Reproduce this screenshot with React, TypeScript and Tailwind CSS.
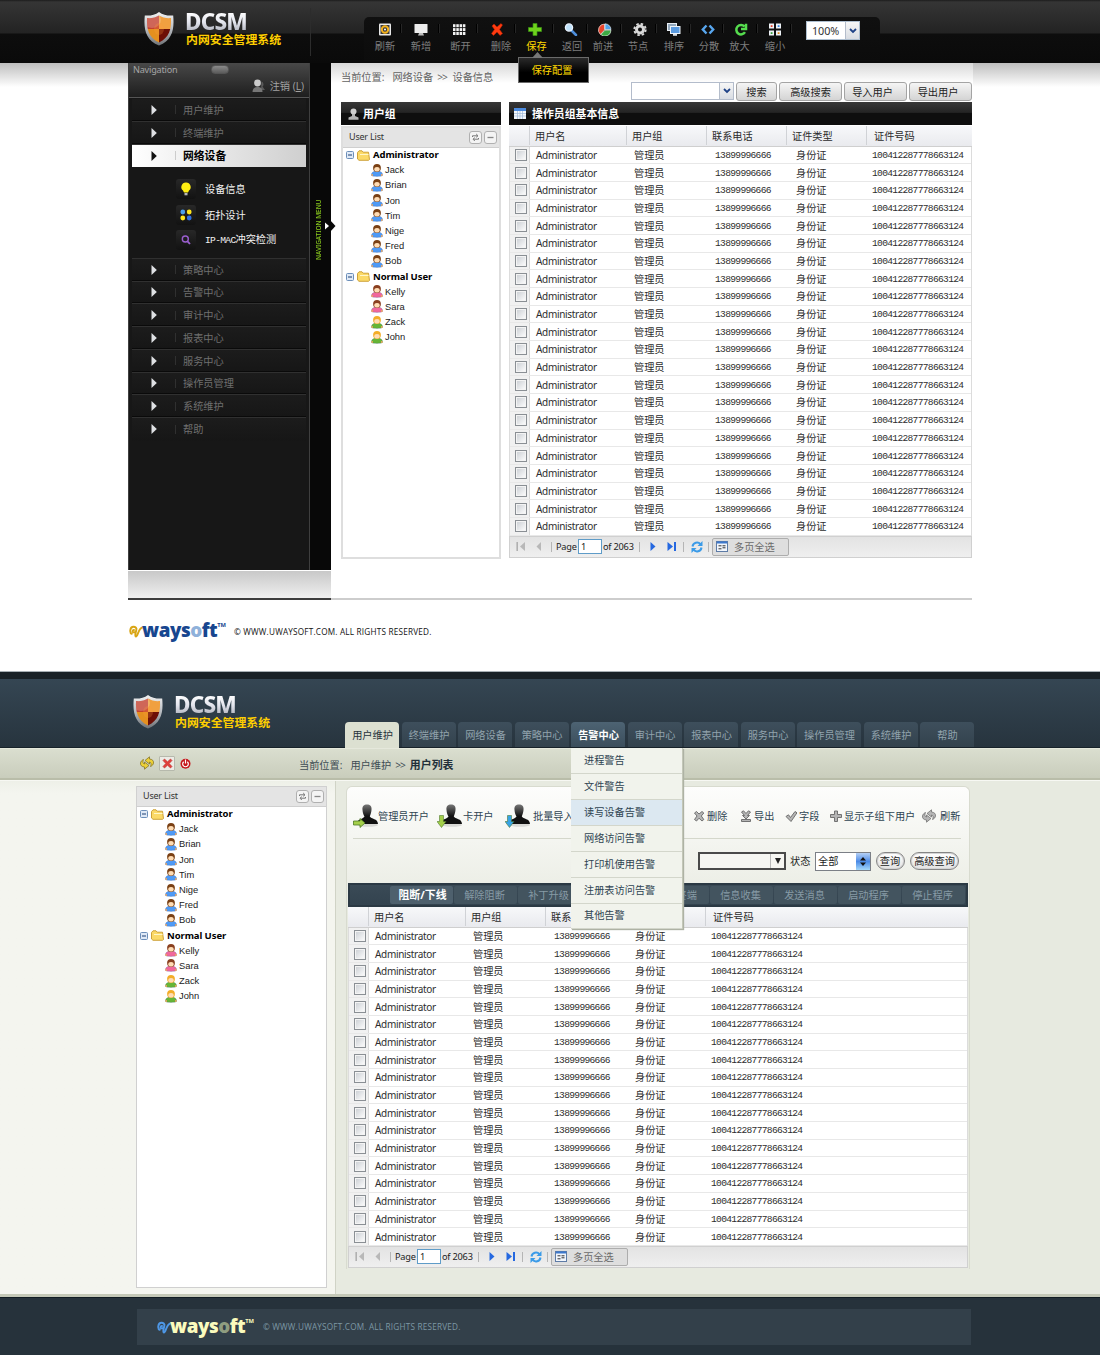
import React from 'react';

const CJK = "font-['Open_Sans','Noto_Sans_CJK_SC',sans-serif]";
const MONO = "font-['Liberation_Mono','Noto_Sans_CJK_SC',monospace] text-[9.6px] tracking-[-0.68px]";

function Shield() {
  return (
    <svg width="30" height="34" viewBox="0 0 30 34" className="shrink-0">
      <defs>
        <linearGradient id="rim" x1="0" y1="0" x2="0" y2="1">
          <stop offset="0" stopColor="#f2f2f2" />
          <stop offset="0.5" stopColor="#b9bdc2" />
          <stop offset="1" stopColor="#6e7276" />
        </linearGradient>
        <clipPath id="shieldClip">
          <path d="M15 3.500C12 5.500 7 6.500 3 6C2.500 17 4.500 25.500 15 30.500C25.500 25.500 27.500 17 27 6C23 6.500 18 5.500 15 3.500Z" />
        </clipPath>
      </defs>
      <path d="M15 0C11 3 6 4 .8 3.500C-.5 17 1.500 28 15 33.500C28.500 28 30.500 17 29.200 3.500C24 4 19 3 15 0Z" fill="url(#rim)" />
      <g clipPath="url(#shieldClip)">
        <rect width="15" height="17" fill="#c4402f" />
        <rect x="15" width="15" height="17" fill="#f0a040" />
        <rect y="17" width="15" height="17" fill="#e5901f" />
        <rect x="15" y="17" width="15" height="17" fill="#6d0f06" />
        <ellipse cx="8" cy="8" rx="9" ry="8" fill="#fff" opacity="0.2" />
        <ellipse cx="15" cy="17" rx="5" ry="6" fill="#ff9a3a" opacity="0.250" />
      </g>
    </svg>
  );
}

function Brand() {
  return (
    <div className="flex">
      <Shield />
      <div className="ml-[11px] flex flex-col">
        <div className="h-[20px] w-[66px] bg-gradient-to-b from-white via-[#e4e6ee] to-[#b0b3be] bg-clip-text font-['Noto_Sans',sans-serif] text-[22.500px] font-extrabold leading-[20px] tracking-[-0.800px] text-transparent">DCSM</div>
        <div className="ml-px whitespace-nowrap font-['Noto_Sans_CJK_SC',sans-serif] text-[11.900px] font-bold leading-[14px] text-[#ffcf00]">内网安全管理系统</div>
      </div>
    </div>
  );
}

const tool: Record<string, React.ReactNode> = {
  refresh: (<g><rect x="1" y="0.500" width="12" height="12" rx="1" fill="#e8e8e8" /><rect x="2.500" y="2" width="9" height="9" fill="#3c3c3c" /><circle cx="7" cy="6.500" r="3.200" fill="none" stroke="#f5b31d" strokeWidth="2" /><circle cx="7" cy="6.500" r="1" fill="#fff" /></g>),
  add: (<g><rect x="0.500" y="1" width="13" height="9" rx="0.500" fill="#ededed" /><path d="M5 10h4l1 2.500H4z" fill="#bcbcbc" /></g>),
  grid: (<g fill="#f2f2f2">{[0, 1, 2, 3].map((c) => [0, 1, 2].map((r) => <rect key={c + '-' + r} x={1 + c * 3.300} y={1.200 + r * 3.900} width="2.500" height="3" />))}</g>),
  del: <path d="M2 3L4 1L7 4L11 .5L12.500 2L9.500 6.500L12.500 10.500L10 12.500L7 9L3.500 12.500L1.500 10.500L4.500 6.500Z" fill="#ff3b10" stroke="#c42000" strokeWidth="0.500" />,
  save: <path d="M5 0.500h4v4h4.500v4H9v4H5v-4H.5v-4H5z" fill="#6fd21c" stroke="#3b9414" strokeWidth="0.700" />,
  back: (<g><path d="M7.500 7.500L12 12" stroke="#4f8fdc" strokeWidth="2.500" strokeLinecap="round" /><circle cx="5" cy="4.500" r="3.600" fill="#bfe2fb" stroke="#eaf4ff" strokeWidth="1.300" /></g>),
  forward: (<g><path d="M6.500 7L6.500 1A6 6 0 0 0 2.500 11.500Z" fill="#e8442c" stroke="#fff" strokeWidth="0.600" /><path d="M7 6.500V.8A6 6 0 0 1 13 6.500Z" fill="#51a5ea" stroke="#fff" strokeWidth="0.600" /><path d="M7 7.200H13A6 6 0 0 1 2.800 11.500Z" fill="#3daa44" stroke="#fff" strokeWidth="0.600" /></g>),
  node: (<g><circle cx="7" cy="6.500" r="3.500" fill="none" stroke="#d9d9d9" strokeWidth="3" /><circle cx="7" cy="6.500" r="5.700" fill="none" stroke="#d9d9d9" strokeWidth="1.900" strokeDasharray="2.500 1.976" /></g>),
  sort: (<g><rect x="0.500" y="0.500" width="9" height="7" fill="#93a8bc" stroke="#e8eef4" /><rect x="3.500" y="3.500" width="9.500" height="7" fill="#5b9be0" stroke="#eef4fa" /><path d="M6 11h4v1.800H6z" fill="#d8dde2" /></g>),
  spread: <path d="M5.500 2.500L1.800 6.500L5.500 10.500M8.500 2.500L12.200 6.500L8.500 10.500" fill="none" stroke="#58a6ee" strokeWidth="2.400" />,
  zoomin: <path d="M11 9.200A4.700 4.700 0 1 1 10.500 3.500M12 .8V6H7" fill="none" stroke="#55dc4e" strokeWidth="2.500" />,
  zoomout: (<g><g fill="#eef2f6"><rect x="1" y="0.500" width="5" height="5" /><rect x="8" y="0.500" width="5" height="5" /><rect x="1" y="7.500" width="5" height="5" /><rect x="8" y="7.500" width="5" height="5" /></g><rect x="2.700" y="2.200" width="1.800" height="1.800" fill="#e23c28" /><rect x="9.700" y="2.200" width="1.800" height="1.800" fill="#2e7fd9" /><rect x="2.700" y="9.200" width="1.800" height="1.800" fill="#36a13a" /><rect x="9.700" y="9.200" width="1.800" height="1.800" fill="#e08a1c" /></g>),
};

const tools = [
  ['refresh', '刷新', 'w-[35px]', 'pl-px'],
  ['add', '新增', 'w-[38px]', ''],
  ['grid', '断开', 'w-[38px]', 'pl-[3px]'],
  ['del', '删除', 'w-[38px]', 'pl-[8px]'],
  ['save', '保存', 'w-[38px]', 'pl-[3px]'],
  ['back', '返回', 'w-[34px]', 'pl-[2px]'],
  ['forward', '前进', 'w-[34px]', 'pr-[4px]'],
  ['node', '节点', 'w-[35px]', 'pr-[3px]'],
  ['sort', '排序', 'w-[34px]', ''],
  ['spread', '分散', 'w-[33px]', 'pl-[3px]'],
  ['zoomin', '放大', 'w-[34px]', 'pr-[3px]'],
  ['zoomout', '缩小', 'w-[34px]', ''],
];

function Header() {
  return (
    <header className="flex h-[63px] bg-[linear-gradient(#1c1c1c_0px,#353535_2px,#232323_33px,#0d0d0d_34px,#0a0a0a_63px)]">
      <div className="ml-[144px] mt-[12px] w-[166px]"><Brand /></div>
      <div className="mt-[8px] h-[48px] w-px bg-[#2c2c2c]" />
      <div className="ml-[53px] mt-[17px] flex h-[44px] w-[516px] rounded-t-[5px] bg-[linear-gradient(#101010,#0c0c0c)] pl-[3px]">
        {tools.map(([icon, label, w, shift]) => (
          <div key={icon} className={'relative flex shrink-0 flex-col items-center pt-[6px] ' + w}>
            <div className="flex w-full justify-center">
              <svg width="14" height="13" viewBox="0 0 14 13">{tool[icon]}</svg>
            </div>
            <div className={'mt-[4px] whitespace-nowrap text-[10.200px] leading-[12px] ' + shift + (icon === 'save' ? ' text-[#ffd800]' : ' text-[#7d7d7d]')}>{label}</div>
            <div className="absolute right-0 top-[7px] h-[9px] w-[2px] border-r border-[#262626] bg-black" />
            {icon === 'save' && (
              <div className="absolute left-[2px] top-[40px] z-20 flex h-[26px] w-[71px] items-center justify-center border border-[#6b6b6b] bg-[linear-gradient(#2a2a2a,#000_60%)] text-[10.200px] leading-[12px] text-[#ffd800]">
                <svg className="absolute left-[13px] top-[-6px]" width="11" height="6" viewBox="0 0 11 6"><path d="M0 6L5.500 0L11 6Z" fill="#777" /></svg>
                <span className="pr-[3px]">保存配置</span>
              </div>
            )}
          </div>
        ))}
        <div className="ml-[14px] mt-[4px] flex h-[19px] w-[54px] border border-[#aebfd0] bg-white">
          <div className="w-[38px] pl-[5px] font-['Noto_Sans',sans-serif] text-[10.800px] leading-[17px] tracking-[-0.100px] text-[#333]">100%</div>
          <ComboArrow />
        </div>
      </div>
    </header>
  );
}

function ComboArrow() {
  return (
    <div className="flex h-full w-[14px] items-center justify-center border-l border-[#b4bdcb] bg-gradient-to-b from-[#f7f7f7] to-[#d8dce2]">
      <svg width="8" height="6" viewBox="0 0 8 6"><path d="M1 1L4 4L7 1" fill="none" stroke="#1e4287" strokeWidth="1.800" /></svg>
    </div>
  );
}

function NavItem({ label, active, last }: { label: string; active?: boolean; last?: boolean }) {
  if (active)
    return (
      <div className="my-[0.500px] flex h-[21.750px] items-center bg-gradient-to-r from-white to-[#cfcfcf]">
        <svg className="ml-[19px]" width="6" height="10" viewBox="0 0 6 10"><path d="M.5 0L5.800 5L.5 10Z" fill="#111" /></svg>
        <div className="ml-[18px] h-[9px] w-px bg-[#ccc]" />
        <span className="ml-[7px] text-[10.800px] font-bold leading-[12px] text-black">{label}</span>
      </div>
    );
  return (
    <div className={'flex h-[22.750px] items-center bg-gradient-to-b from-[#1c1c1c] to-[#161616] ' + (last ? '' : 'border-b border-[#303030] shadow-[0_-1px_0_#0a0a0a_inset]')}>
      <svg className="ml-[19px]" width="6" height="10" viewBox="0 0 6 10"><path d="M.5 0L5.800 5L.5 10Z" fill="#dfe1e4" /></svg>
      <div className="ml-[18px] h-[9px] w-px bg-[#303030]" />
      <span className="ml-[7px] text-[10.200px] leading-[12px] text-[#6f6f6f]">{label}</span>
    </div>
  );
}

function SubItem({ label, icon }: { label: string; icon: React.ReactNode }) {
  return (
    <div className="flex h-[25.500px] items-center pl-[44px]">
      <div className="flex h-[20px] w-[20px] items-center justify-center rounded-[3px] bg-gradient-to-b from-[#282828] to-[#121212]">
        <svg width="14" height="14" viewBox="0 0 14 14">{icon}</svg>
      </div>
      <span className="ml-[9px] whitespace-nowrap text-[10.200px] leading-[12px] text-[#f2f2f2]">
        {label.startsWith('IP-MAC') ? <><span className={MONO}>IP-MAC</span>{label.slice(6)}</> : label}
      </span>
    </div>
  );
}

function Sidebar() {
  return (
    <div className="flex h-[507px] w-[203px] bg-[#080808]">
      <div className="flex w-[182px] flex-col border-l border-r border-[#3f3f3f] bg-[#171717]">
        <div className="h-[35px] border-b border-[#555] bg-gradient-to-b from-[#484848] via-[#333] to-[#1e1e1e] pl-[4px]">
          <div className="flex h-[13px] items-center">
            <span className="w-[78px] font-['Noto_Sans',sans-serif] text-[9.100px] leading-[12px] tracking-[-0.200px] text-[#a5a5a5]">Navigation</span>
            <div className="h-[9px] w-[18px] rounded-[4px] border border-[#555] bg-gradient-to-b from-[#8a8a8a] to-[#5c5c5c]" />
          </div>
          <div className="flex h-[20px] items-center justify-end pr-[5px] text-[#a2a2a2]">
            <svg width="14" height="14" viewBox="0 0 14 14"><path d="M9.500 2.500a3 3 0 0 1 1 5l2.500 3.500H9z" fill="#5a5a5a" /><circle cx="5.500" cy="4" r="3.400" fill="#ccc" /><path d="M.5 13C.5 9.500 2.500 8 5.500 8s5 1.300 5 5z" fill="#777" /></svg>
            <span className="ml-[4px] text-[10.200px] leading-[12px]">注销 (<span className="underline">L</span>)</span>
          </div>
        </div>
        <div className="flex flex-col px-[3px] pt-[1px]">
          <NavItem label="用户维护" />
          <NavItem label="终端维护" />
          <NavItem label="网络设备" active />
          <div className="border-b border-[#303030] pb-[5px] pt-[9px]">
            <SubItem label="设备信息" icon={<g><path d="M7 .5a4.500 4.500 0 0 1 3 8L9 10.500H5L4 8.500a4.500 4.500 0 0 1 3-8z" fill="#ffee12" /><path d="M5.500 11h3v2.300h-3z" fill="#b8b8b8" /></g>} />
            <SubItem label="拓扑设计" icon={<g><circle cx="3.800" cy="4" r="2.400" fill="#4b9fec" /><circle cx="10.200" cy="4" r="2.400" fill="#ffe61c" /><circle cx="3.800" cy="10" r="2.400" fill="#ffe61c" /><circle cx="10.200" cy="10" r="2.400" fill="#2f6fe0" /></g>} />
            <SubItem label="IP-MAC冲突检测" icon={<g fill="none" stroke="#9b5fd0" strokeWidth="1.400"><circle cx="6.300" cy="6" r="3" /><path d="M8.500 8.300L11 11" strokeWidth="1.800" /></g>} />
          </div>
          {['策略中心', '告警中心', '审计中心', '报表中心', '服务中心', '操作员管理', '系统维护'].map((l) => <NavItem key={l} label={l} />)}
          <NavItem label="帮助" last />
        </div>
      </div>
      <div className="relative flex w-[21px] items-start pt-[134px]">
        <span className="ml-[2px] h-[66px] w-[14px] rotate-180 whitespace-nowrap text-center font-['Noto_Sans',sans-serif] text-[6.600px] font-medium leading-[14px] tracking-[-0.100px] text-[#86c51d] [writing-mode:vertical-rl]">NAVIGATION MENU</span>
        <svg className="absolute left-[14px] top-[157px]" width="12" height="12" viewBox="0 0 12 12"><path d="M6 0L11.500 6L6 12Z" fill="#080808" /><path d="M1 2.500L5 6L1 9.500Z" fill="#fff" /></svg>
      </div>
    </div>
  );
}

function Person({ body, hair }: { body: string; hair: string }) {
  return (
    <svg width="12" height="13" viewBox="0 0 12 13">
      <path d="M.5 11.500C0 9 2 7 6 7S12 9 11.500 11.500C10 12.700 2 12.700 .5 11.500Z" fill={body} stroke="#1c3a78" strokeOpacity="0.350" strokeWidth="0.600" />
      <circle cx="6" cy="4" r="3.900" fill={hair} />
      <ellipse cx="6" cy="5.300" rx="2.700" ry="2.300" fill="#ffdcb4" />
      <circle cx="1.200" cy="11" r="0.900" fill="#f0a860" /><circle cx="10.800" cy="11" r="0.900" fill="#f0a860" />
    </svg>
  );
}

const blue = ['#4f9af5', '#7a4014'];
const pink = ['#f0689c', '#8a4020'];
const green = ['#66b536', '#f3ad28'];
const tree: [string, [string, string[]][]][] = [
  ['Administrator', ['Jack', 'Brian', 'Jon', 'Tim', 'Nige', 'Fred', 'Bob'].map((n) => [n, blue] as [string, string[]])],
  ['Normal User', [['Kelly', pink], ['Sara', pink], ['Zack', green], ['John', green]]],
];

function UserPanel({ size, plain }: { size: string; plain?: boolean }) {
  return (
    <div className={'flex flex-col bg-white ' + (plain ? 'border border-[#d0d0d0] ' : 'border-2 border-[#dedede] ') + size}>
      <div className="flex h-[19.500px] shrink-0 items-center justify-between border-b border-[#cfcfcf] bg-[#e4e4e4] pr-[2px] pl-[6px]">
        <span className="font-['Noto_Sans',sans-serif] text-[9px] leading-[12px] tracking-[-0.200px] text-[#333]">User List</span>
        <div className="flex gap-[2px]">
          <svg width="13" height="13" viewBox="0 0 13 13"><rect x="0.500" y="0.500" width="12" height="12" rx="2.500" fill="#f4f4f4" stroke="#b0b0b0" /><path d="M3.500 6V4.800H8.500M7.200 3L9 4.800L7.200 6.300M9.500 7V8.200H4.500M5.800 6.700L4 8.200L5.800 10" fill="none" stroke="#777" /></svg>
          <svg width="13" height="13" viewBox="0 0 13 13"><rect x="0.500" y="0.500" width="12" height="12" rx="2.500" fill="#f4f4f4" stroke="#b0b0b0" /><path d="M3.500 6.500H9.500" stroke="#888" strokeWidth="1.300" /></svg>
        </div>
      </div>
      {tree.map(([group, users]) => (
        <div key={group} className="flex flex-col">
          <div className="flex h-[15.200px] items-center pl-[3px]">
            <svg width="8" height="8" viewBox="0 0 8 8"><rect x="0.500" y="0.500" width="7" height="7" rx="1" fill="#dfe9f6" stroke="#6c8fba" /><path d="M2 4H6" stroke="#1d3f73" /></svg>
            <svg className="ml-[3px]" width="13" height="11" viewBox="0 0 13 11"><path d="M.5 2.500L2 .8H5L6.200 2.200H11.500L12.500 9.500L11.500 10.300H2L.5 9Z" fill="#fbd968" stroke="#c89a2c" strokeWidth="0.900" /><path d="M3 4.500H11.500" stroke="#fff6c8" /></svg>
            <span className="ml-[3px] font-['Noto_Sans',sans-serif] text-[9.500px] font-bold leading-[12px] tracking-[-0.080px] text-black">{group}</span>
          </div>
          {users.map(([n, [body, hair]]) => (
            <div key={n} className="flex h-[15.200px] items-center pl-[28px]">
              <Person body={body} hair={hair} />
              <span className="ml-[2px] font-['Liberation_Sans',sans-serif] text-[9.350px] leading-[12px] text-[#222]">{n}</span>
            </div>
          ))}
        </div>
      ))}
    </div>
  );
}

function Pager() {
  const bar = 'h-[10px] w-px bg-[#b5b5b5]';
  return (
    <div className="flex h-[22px] shrink-0 items-center border border-[#d0d0d0] bg-gradient-to-b from-[#e3e3e3] to-[#efefef] font-['Noto_Sans','Noto_Sans_CJK_SC',sans-serif] text-[9.200px] leading-[12px] tracking-[-0.200px] text-[#222]">
      <svg className="ml-[6px]" width="10" height="9" viewBox="0 0 10 9"><path d="M1.200 0V9" stroke="#b0b0b0" strokeWidth="1.600" /><path d="M9 0L4 4.500L9 9Z" fill="#b8b8b8" /></svg>
      <svg className="ml-[10px]" width="6" height="9" viewBox="0 0 6 9"><path d="M5 0L.5 4.500L5 9Z" fill="#b8b8b8" /></svg>
      <div className={'ml-[9px] ' + bar} />
      <span className="ml-[4px] w-[22px]">Page</span>
      <div className="h-[15px] w-[24px] border border-[#5f9cc8] bg-white pl-[2px] leading-[13px]">1</div>
      <span className="ml-[1px] w-[33px] whitespace-nowrap">of 2063</span>
      <div className={'ml-[3px] ' + bar} />
      <svg className="ml-[10px]" width="6" height="9" viewBox="0 0 6 9"><path d="M.5 0L5.500 4.500L.5 9Z" fill="#2568e0" /></svg>
      <svg className="ml-[11px]" width="10" height="9" viewBox="0 0 10 9"><path d="M.5 0L6 4.500L.5 9Z" fill="#2568e0" /><path d="M8 0V9" stroke="#2568e0" strokeWidth="2" /></svg>
      <div className={'ml-[6px] ' + bar} />
      <svg className="ml-[7px]" width="12" height="12" viewBox="0 0 12 12"><path d="M1.500 5.500A4.500 4.500 0 0 1 9.500 3.300M10.500 6.500A4.500 4.500 0 0 1 2.500 8.700" fill="none" stroke="#3b9be8" strokeWidth="2" /><path d="M11.500 0V5H6.500Z" fill="#3b9be8" /><path d="M.5 12V7H5.500Z" fill="#3b9be8" /></svg>
      <div className={'ml-[5px] ' + bar} />
      <div className="ml-[3px] flex h-[18px] w-[77px] items-center rounded-[2px] border border-[#adadad] bg-[#dedede] pl-[3px]">
        <svg width="12" height="11" viewBox="0 0 12 11"><rect x="0.500" y="0.500" width="11" height="10" fill="#f2f6fc" stroke="#5d7ba6" /><path d="M1 1.500H11" stroke="#3d78cc" strokeWidth="2" /><path d="M2.500 4.800H5.500M6.500 4.800H9.500M2.500 7.800H5.500M6.500 6.800H9.500" stroke="#333" /></svg>
        <span className="ml-[6px] text-[10.200px] tracking-normal text-[#6b6b6b]">多页全选</span>
      </div>
    </div>
  );
}

function DataGrid({ rows, cls }: { rows: number; cls: string }) {
  const cols = 'grid grid-cols-[20px_97px_80px_80px_1fr] items-center';
  const h = 'flex h-[19px] items-center border-l border-[#d0d2d6] pl-[5px]';
  return (
    <div className={'flex flex-col bg-white ' + cls}>
      <div className={cols + ' h-[20.500px] shrink-0 border-b border-[#cfcfcf] bg-gradient-to-b from-[#f7f8fa] to-[#e9eaee] text-[10.200px] leading-[12px] text-[#2b2b2b]'}>
        <div />
        <div className={h}>用户名</div>
        <div className={h}>用户组</div>
        <div className={h}>联系电话</div>
        <div className={h}><span className="w-[74px]">证件类型</span><div className="flex h-[19px] items-center border-l border-[#d0d2d6] pl-[7px]">证件号码</div></div>
      </div>
      <div className="flex flex-col border-x border-[#dcdcdc]">
        {Array.from({ length: rows }, (_, i) => (
          <div key={i} className={cols + ' h-[17.700px] shrink-0 border-b border-[#e8e8e8] text-[10.200px] leading-[12px] text-[#2e2e2e]'}>
            <div className="flex h-full items-center border-r border-[#d8d8d8] bg-[#f1f1f1] pl-[5px]">
              <div className="h-[12px] w-[12px] border border-[#8a8f94] bg-gradient-to-br from-[#c9cdd2] to-white shadow-[inset_0_0_0_1px_#f4f4f4]" />
            </div>
            <div className="pl-[6px] font-['Noto_Sans',sans-serif] text-[10px] tracking-[-0.320px]">Administrator</div>
            <div className="pl-[7px]">管理员</div>
            <div className={'pl-[8px] pt-[2px] ' + MONO}>13899996666</div>
            <div className="flex items-center pl-[9px]"><span className="w-[76px]">身份证</span><span className={'pt-[2px] ' + MONO}>100412287778663124</span></div>
          </div>
        ))}
      </div>
      <Pager />
    </div>
  );
}

function Wordmark({ mark, main, o }: { mark: string; main: string; o: string }) {
  return (
    <div className="flex h-[21px] w-[97px] items-start">
      <svg className="mt-[4px] shrink-0" width="15" height="13" viewBox="0 0 15 13"><path d="M2.800 8.800C.5 8 .6 2 4.500 1.800C8.500 1.600 8 7 5 7.400C2.800 7.600 3.600 4.800 5 5M7.400 3.500C7.800 6 5 10.500 6.800 11.500C9 12 9 3 13.800 2.200" fill="none" stroke={mark} strokeWidth="1.900" strokeLinecap="round" /></svg>
      <span className="ml-[-2px] font-['Open_Sans',sans-serif] text-[18.800px] font-extrabold leading-[19px] tracking-[-0.450px]"><span className={main}>ways</span><span className={o}>o</span><span className={main}>ft</span></span>
      <span className={"mt-px font-['Open_Sans',sans-serif] text-[5.800px] font-bold leading-[6px] " + main}>TM</span>
    </div>
  );
}

function GlossButton({ label, w }: { label: string; w: string }) {
  return <button className={'flex h-[19px] items-center justify-center rounded-[3px] border border-[#a4a4a4] bg-gradient-to-b from-[#f5f5f5] to-[#d4d4d4] text-[10.200px] leading-[12px] text-[#222] ' + w}>{label}</button>;
}

function DarkTitle({ label, icon }: { label: string; icon: React.ReactNode }) {
  return (
    <div className="flex h-[23px] shrink-0 items-center bg-[linear-gradient(#383838,#242424_45%,#0e0e0e_50%,#0e0e0e)]">
      {icon}
      <span className="text-[10.900px] font-bold leading-[12px] text-white">{label}</span>
    </div>
  );
}

function DarkScreen() {
  return (
    <section className="h-[672px] bg-white">
      <Header />
      <div className="h-[608px] bg-[linear-gradient(#bebebe,#fff_24px)]">
        <div className="ml-[128px] flex h-[507px] w-[844px]">
          <Sidebar />
          <div className="flex flex-1 flex-col bg-gradient-to-b from-[#d8d8d8] to-white to-[20px] pl-[10px]">
            <div className="flex h-[39px] items-start">
              <div className="mt-[8px] w-[290px] whitespace-pre text-[10.200px] leading-[12px] text-[#636363]">当前位置:<span className="ml-[8px]">网络设备</span><span className="ml-[4px] mr-[3px] tracking-[-1px]">&gt;&gt;</span> 设备信息</div>
              <div className="mt-[19px] flex w-[342px] shrink-0 gap-[2px]">
                <div className="flex h-[18px] w-[103px] border border-[#b3bccb] bg-white"><div className="w-[87px]" /><ComboArrow /></div>
                <GlossButton label="搜索" w="w-[41px]" />
                <GlossButton label="高级搜索" w="w-[63px]" />
                <GlossButton label="导入用户" w="w-[63px] pr-[6px]" />
                <GlossButton label="导出用户" w="w-[63px] pr-[5px]" />
              </div>
            </div>
            <div className="flex">
              <div className="flex w-[160px] flex-col">
                <DarkTitle label="用户组" icon={<svg className="ml-[7px] mr-[4px]" width="11" height="12" viewBox="0 0 11 12"><circle cx="5.500" cy="3.500" r="3" fill="#cfcfcf" /><path d="M4 6h3v2l3.500 1.500v2.200H.5V9.500L4 8z" fill="#b5b5b5" /></svg>} />
                <UserPanel size="mt-[1px] h-[433px] w-[160px]" />
              </div>
              <div className="ml-[8px] flex w-[463px] flex-col">
                <DarkTitle label="操作员组基本信息" icon={<svg className="ml-[5px] mr-[6px]" width="12" height="11" viewBox="0 0 12 11"><rect width="12" height="11" rx="0.500" fill="#f4f8fc" /><rect width="12" height="3" fill="#4b8ade" /><path d="M3.500 3V11M6 3V11M8.500 3V11M0 5.500H12M0 8H12" stroke="#9db9da" strokeWidth="0.700" /></svg>} />
                <DataGrid rows={22} cls="mt-[1px]" />
              </div>
            </div>
          </div>
        </div>
        <div className="ml-[128px] flex h-[30px] w-[844px] items-end">
          <div className="h-[29px] w-[203px] border-b-2 border-[#3c3c3c] bg-gradient-to-b from-[#c8c8c8] to-[#f0f0f0]" />
          <div className="h-[2px] flex-1 bg-[#cdcdcd]" />
        </div>
        <div className="ml-[129px] mt-[21px] flex items-center">
          <Wordmark mark="#d9a514" main="text-[#17468f]" o="text-[#8fb1da]" />
          <span className="ml-[8px] whitespace-nowrap font-['Open_Sans',sans-serif] text-[8.200px] leading-[12px] tracking-[0.200px] text-[#111]">© WWW.UWAYSOFT.COM. ALL RIGHTS RESERVED.</span>
        </div>
      </div>
      <div className="h-px bg-[#a8b0b4]" />
    </section>
  );
}

const tabs: [string, string][] = [
  ['用户维护', 'w-[54px]'], ['终端维护', 'w-[54px]'], ['网络设备', 'w-[54px]'], ['策略中心', 'w-[54px]'], ['告警中心', 'w-[54px]'],
  ['审计中心', 'w-[54px]'], ['报表中心', 'w-[54px]'], ['服务中心', 'w-[54px]'], ['操作员管理', 'w-[64px]'], ['系统维护', 'w-[54px]'], ['帮助', 'w-[54px]'],
];
const menu = ['进程警告', '文件警告', '读写设备告警', '网络访问告警', '打印机使用告警', '注册表访问告警', '其他告警'];

function DropMenu() {
  return (
    <div className="absolute left-0 top-[26px] z-30 w-[112px] border-r border-[#c3c7b8] bg-[#f1f3ec] font-normal shadow-[1px_1px_1px_#aeb2a4]">
      {menu.map((m, i) => (
        <div key={m} className={'flex h-[26.080px] items-center border-b border-[#d3d6cb] pb-[2px] pl-[13px] text-[10.200px] leading-[12px] text-[#2f4452] last:h-[25px] ' + (i === 2 ? 'bg-[#dce8f1]' : '')}>{m}</div>
      ))}
    </div>
  );
}

function Account({ color, down }: { color: string; down?: boolean }) {
  return (
    <svg className="shrink-0" width="26" height="25" viewBox="0 0 26 25">
      <defs><linearGradient id="bust" x1="0" y1="0" x2="0" y2="1"><stop offset="0" stopColor="#777" /><stop offset="0.600" stopColor="#111" /></linearGradient></defs>
      <ellipse cx="15" cy="21" rx="10" ry="1.800" fill="#000" opacity="0.120" />
      <path d="M9.500 6C9 2 11 .5 14 .5S19 2 18.500 6C18.300 9 17.300 11 16.800 12.500C18 15 25 14.500 25 20H3.500C4 15 10.500 15 11.500 12.500C10.500 11 9.700 9 9.500 6Z" fill="url(#bust)" />
      {down ? <path d="M2.500 11.500H6.500V17.500H9L4.500 23.500L0 17.500H2.500Z" fill={color} stroke="#47752a" strokeOpacity="0.700" strokeWidth="0.800" /> : <path d="M.5 17H7V14.500L12 19L7 23.500V21H.5Z" fill={color} stroke="#4d7a24" strokeWidth="0.800" />}
    </svg>
  );
}

const actionIcon = {
  del: <path d="M1.500 3L3.500 1.500L6 4L9 1.500L10.800 3L8.300 6L10.800 9.500L9 11L6 8.200L3.500 11L1.500 9.500L4 6Z" />,
  exp: <path d="M1.500 2L3.500 .8L6 3.500L8.500 .8L10.500 2L7.500 5.500H9.500L6 9L2.500 5.500H4.500ZM1.500 9.500H10.500V11.500H1.500Z" />,
  field: <path d="M1 6.500L3.500 4.800L5.500 7.500L10 1.500L12 2.800L6 11.500Z" />,
  plus: <path d="M4.500 1H7.500V4.500H11.500V7.500H7.500V11.500H4.500V7.500H.5V4.500H4.500Z" />,
};

function Action({ icon, label, cls }: { icon: keyof typeof actionIcon; label: string; cls: string }) {
  return (
    <div className={'flex shrink-0 items-center whitespace-nowrap ' + cls}>
      <svg width="12" height="12" viewBox="0 0 12 12" fill="#b5b5b5" stroke="#666" strokeWidth="0.900">{actionIcon[icon]}</svg>
      <span className="ml-[2px]">{label}</span>
    </div>
  );
}

function SyncIcon({ fill, line }: { fill: string; line: string }) {
  return (
    <svg width="14" height="14" viewBox="0 0 14 14" fill={fill} stroke={line} strokeWidth="0.700">
      <path d="M5 4.500L9.500 .8V3C12.500 3.200 13.800 5 13.500 7C13.300 8.500 12 10 10.500 10.500C11.500 8.500 11.300 6.300 9.500 6V8Z" />
      <path d="M9 9.500L4.500 13.200V11C1.500 10.800 .2 9 .5 7C.7 5.500 2 4 3.500 3.500C2.500 5.500 2.700 7.700 4.500 8V6Z" />
    </svg>
  );
}

function SlateScreen() {
  return (
    <section className="flex h-[683px] flex-col bg-[#26323b]">
      <div className="h-[7px] bg-[#1a2227]" />
      <div className="flex h-[69px] border-b border-[#172229] bg-gradient-to-b from-[#354653] to-[#27343e]">
        <div className="ml-[133px] mt-[16px] w-[212px]"><Brand /></div>
        <div className="mt-[43px] flex h-[25px] gap-[2.500px]">
          {tabs.map(([t, w], i) => (
            <div key={t} className={'relative flex shrink-0 items-center justify-center rounded-t-[4px] pl-px text-[10.200px] leading-[12px] ' + w + (i === 0 ? ' h-[26px] bg-[#dce0d1] text-[#26323b]' : i === 4 ? ' bg-gradient-to-b from-[#4d6373] to-[#3b4e5c] font-bold text-white' : ' bg-gradient-to-b from-[#3e4f5c] to-[#33424d] text-[#91a3ad]')}>
              {t}
              {i === 4 && <DropMenu />}
            </div>
          ))}
        </div>
      </div>
      <div className="flex h-[32px] items-center border-b-2 border-[#b9bda9] bg-[linear-gradient(#f0f2e8_0px,#dadecf_1px,#c9cdbc_30px)] text-[10.200px] leading-[12px] text-[#3d4b53]">
        <div className="flex w-[299px] shrink-0 items-center pl-[140px]">
          <SyncIcon fill="#ecd037" line="#7a6a20" />
          <div className="ml-[5px] flex h-[15px] w-[16px] items-center justify-center rounded-[1px] border border-[#b6b9ac] bg-[#ecebe5]">
            <svg width="11" height="11" viewBox="0 0 11 11"><path d="M1 2.500L2.500 1L5.500 3.800L8.500 1L10 2.500L7.200 5.500L10 8.500L8.500 10L5.500 7.200L2.500 10L1 8.500L3.800 5.500Z" fill="#e2403c" stroke="#b92a28" strokeWidth="0.600" /></svg>
          </div>
          <svg className="ml-[5px]" width="11" height="11" viewBox="0 0 11 11"><circle cx="5.500" cy="5.800" r="5" fill="#c5181c" /><path d="M3.700 3.800A2.800 2.800 0 1 0 7.300 3.800M5.500 1.500V5.500" fill="none" stroke="#fff" strokeWidth="1.200" /></svg>
        </div>
        <span className="whitespace-nowrap pt-[3px]">当前位置:<span className="ml-[8px]">用户维护</span><span className="mx-[4px] tracking-[-1px]">&gt;&gt;</span><b className="ml-[1px] text-[10.900px] text-[#22303a]">用户列表</b></span>
      </div>
      <div className="flex h-[514px] border-t border-[#f7f8f3] bg-[#e7eae0]">
        <div className="flex w-[336px] shrink-0 justify-end border-r border-[#d0d3c6] bg-gradient-to-b from-[#eef0e8] to-[#f4f5ef] to-[12px] pr-[8px] pt-[5px]">
          <UserPanel plain size="h-[502px] w-[191px]" />
        </div>
        <div className="ml-[10px] mt-[5px] flex h-[483px] w-[624px] flex-col rounded-t-[6px] border border-b-0 border-[#d8dbcf] bg-[linear-gradient(#fdfdfc,#eceee6_100px,#e7eae0_130px)] px-px">
          <div className="ml-[5px] flex h-[52px] w-[608px] items-center border-b border-[#d4d7cb] pt-[7px] text-[10.200px] leading-[12px] text-[#2f4452]">
            <Account color="#a4cf4a" /><span className="ml-[-1px] w-[59px] whitespace-nowrap">管理员开户</span>
            <Account color="#a4cf4a" down /><span className="w-[42px] whitespace-nowrap">卡开户</span>
            <Account color="#37a3e6" down /><span className="ml-[2px] w-[160px] whitespace-nowrap">批量导入</span>
            <Action icon="del" label="删除" cls="w-[47px]" />
            <Action icon="exp" label="导出" cls="w-[45px]" />
            <Action icon="field" label="字段" cls="w-[45px]" />
            <Action icon="plus" label="显示子组下用户" cls="w-[92px]" />
            <SyncIcon fill="#b5b5b5" line="#666" /><span className="ml-[4px] whitespace-nowrap">刷新</span>
          </div>
          <div className="flex h-[44px] items-center pl-[350px] text-[10.200px] leading-[12px] text-[#222]">
            <div className="flex h-[18px] w-[88px] justify-end border-2 border-[#4a4a4a] bg-[#f6f6f2]">
              <div className="flex w-[14px] items-center justify-center border-l border-[#b9b9b9]"><svg width="6" height="6" viewBox="0 0 6 6"><path d="M0 0H6L3 6Z" fill="#222" /></svg></div>
            </div>
            <span className="ml-[4px] w-[25px] whitespace-nowrap">状态</span>
            <div className="flex h-[19px] w-[56px] items-center border border-[#7b7f86] bg-white">
              <span className="w-[40px] pl-[2px]">全部</span>
              <div className="flex h-full w-[14px] items-center justify-center bg-gradient-to-b from-[#b5d0f4] via-[#4b8ae6] to-[#a5d8fa]"><svg width="6" height="9" viewBox="0 0 6 9"><path d="M0 3.500L3 0L6 3.500ZM0 5.500L3 9L6 5.500Z" fill="#111" /></svg></div>
            </div>
            <button className="ml-[5px] h-[18px] w-[29px] whitespace-nowrap rounded-full border border-[#858585] bg-gradient-to-b from-white to-[#e2e2e2] shadow-[inset_0_0_0_1px_#d4d4d4]"><span className="ml-[-1px]">查询</span></button>
            <button className="ml-[5px] h-[18px] w-[49px] whitespace-nowrap rounded-full border border-[#858585] bg-gradient-to-b from-white to-[#e2e2e2] shadow-[inset_0_0_0_1px_#d4d4d4]">高级查询</button>
          </div>
          <div className="flex h-[24px] w-[620px] shrink-0 items-center gap-px border-2 border-[#2b3944] bg-gradient-to-b from-[#3a4a56] to-[#33434f] pl-[40px] text-[10.200px] leading-[12px] text-[#879ba6]">
            {['阻断/下线', '解除阻断', '补丁升级', '远程协助', '重启终端', '信息收集', '发送消息', '启动程序', '停止程序'].map((t, i) => (
              <div key={t} className={'flex h-[18px] w-[63px] shrink-0 items-center justify-center whitespace-nowrap rounded-[2px] ' + (i === 0 ? 'bg-[#4e606d] pl-[2px] text-[10.900px] font-bold text-white' : 'bg-[#43545f] pr-[2px]')}>{t}</div>
            ))}
          </div>
          <DataGrid rows={18} cls="w-[620px]" />
        </div>
      </div>
      <div className="h-[4px] border-b border-[#111b22] bg-[#c4c8b7]" />
      <div className="ml-[137px] mt-[11px] flex h-[36px] w-[834px] items-center bg-[#33404a] pl-[20px]">
        <Wordmark mark="#4e97e6" main="text-[#fbfbbd]" o="text-[#8f9d80]" />
        <span className="ml-[9px] whitespace-nowrap font-['Open_Sans',sans-serif] text-[8.200px] leading-[12px] tracking-[0.200px] text-[#7d98a4]">© WWW.UWAYSOFT.COM. ALL RIGHTS RESERVED.</span>
      </div>
    </section>
  );
}

export default function App() {
  return (
    <main className={'w-[1100px] overflow-hidden ' + CJK}>
      <DarkScreen />
      <SlateScreen />
    </main>
  );
}
